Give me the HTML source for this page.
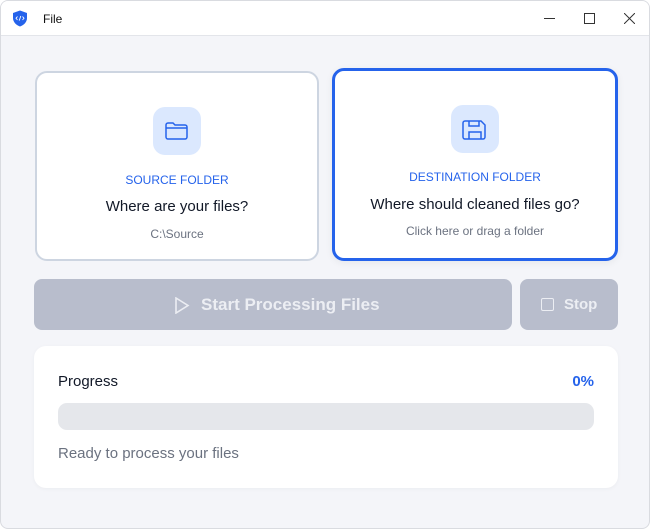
<!DOCTYPE html>
<html><head><meta charset="utf-8"><style>
*{box-sizing:border-box;margin:0;padding:0}
body{width:650px;height:529px;background:#fff;font-family:"Liberation Sans",sans-serif;overflow:hidden;position:relative}
.win{position:absolute;left:0;top:0;width:650px;height:529px;border:1px solid #d9dbe0;border-radius:8px;background:#f4f5f9;overflow:hidden}
.title{position:absolute;left:0;top:0;width:650px;height:35px;background:#fff;border-bottom:1px solid #e3e5ea}
.title .t{position:absolute;left:42px;top:11px;font-size:12px;color:#111}
.card{position:absolute;background:#fff;border-radius:12px;text-align:center}
.ic{position:absolute;width:48px;height:48px;border-radius:12px;background:#dbe8fe;left:50%;margin-left:-24px}
.lbl{position:absolute;width:100%;font-size:12px;color:#2563eb}
.h{position:absolute;width:100%;font-size:15px;color:#111827}
.s{position:absolute;width:100%;font-size:12px;color:#6b7280}
.btn{position:absolute;background:#b8bdcc;border-radius:8px;color:#eceef3;font-weight:bold;font-size:17px}
</style></head><body>
<div class="win">
<div class="title">
<svg style="position:absolute;left:11px;top:9px" width="16" height="17" viewBox="0 0 16 17"><path d="M8 0.5 L15 3 V8 C15 12 12 15 8 16.5 C4 15 1 12 1 8 V3 Z" fill="#2563eb"/><path d="M5.5 6.5 L4 8.3 L5.5 10 M10.5 6.5 L12 8.3 L10.5 10 M8.8 6 L7.2 10.6" stroke="#fff" stroke-width="0.9" fill="none"/></svg>
<div class="t">File</div>
<div style="position:absolute;left:543px;top:17px;width:11px;height:1px;background:#333"></div>
<div style="position:absolute;left:583px;top:12px;width:11px;height:11px;border:1px solid #333"></div>
<svg style="position:absolute;left:623px;top:12px" width="11" height="11"><path d="M0 0L11 11M11 0L0 11" stroke="#333" stroke-width="1"/></svg>
</div>

<div class="card" style="left:34px;top:70px;width:284px;height:190px;border:2.5px solid #cdd5e1">
<div class="ic" style="top:34px"><svg width="48" height="48"><path d="M13 18 a2 2 0 0 1 2-2 h5 l2 2 h10 a2 2 0 0 1 2 2 v10 a2 2 0 0 1 -2 2 h-17 a2 2 0 0 1 -2-2 z M13 21 h21" stroke="#2563eb" stroke-width="1.5" fill="none"/></svg></div>
<div class="lbl" style="top:100px">SOURCE FOLDER</div>
<div class="h" style="top:125px">Where are your files?</div>
<div class="s" style="top:154px">C:\Source</div>
</div>

<div class="card" style="left:331px;top:67px;width:286px;height:193px;border:3px solid #2563eb;box-shadow:0 2px 8px rgba(0,0,0,.06)">
<div class="ic" style="top:34px"><svg width="48" height="48"><path d="M14 16 h16 l4 4 v12 a2 2 0 0 1 -2 2 h-18 a2 2 0 0 1 -2 -2 v-14 a2 2 0 0 1 2 -2 z M18 16 v5 h10 v-5 M18 34 v-7 h12 v7" stroke="#2563eb" stroke-width="1.5" fill="none"/></svg></div>
<div class="lbl" style="top:99px">DESTINATION FOLDER</div>
<div class="h" style="top:125px">Where should cleaned files go?</div>
<div class="s" style="top:153px">Click here or drag a folder</div>
</div>

<div class="btn" style="left:33px;top:278px;width:478px;height:51px">
<svg style="position:absolute;left:140px;top:18px" width="16" height="17"><path d="M2 1 L14 8.5 L2 16 Z" stroke="#eceef3" stroke-width="1.6" fill="none"/></svg>
<span style="position:absolute;left:167px;top:16px">Start Processing Files</span></div>
<div class="btn" style="left:519px;top:278px;width:98px;height:51px;font-size:15px">
<div style="position:absolute;left:21px;top:19px;width:13px;height:13px;border:1.6px solid #eceef3;border-radius:2px"></div>
<span style="position:absolute;left:44px;top:17px">Stop</span></div>

<div class="card" style="left:33px;top:345px;width:584px;height:142px;text-align:left;box-shadow:0 1px 4px rgba(0,0,0,.04)">
<div style="position:absolute;left:24px;top:27px;font-size:15px;color:#111827">Progress</div>
<div style="position:absolute;right:24px;top:27px;font-size:15px;color:#2563eb;font-weight:bold">0%</div>
<div style="position:absolute;left:24px;top:57px;width:536px;height:27px;background:#e5e7eb;border-radius:9px"></div>
<div style="position:absolute;left:24px;top:99px;font-size:15px;color:#6b7280">Ready to process your files</div>
</div>
</div>
</body></html>
